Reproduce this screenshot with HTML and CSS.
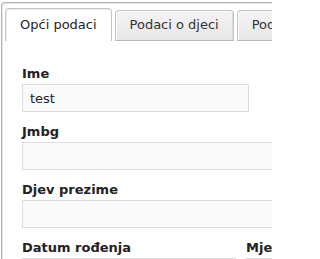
FILE: index.html
```html
<!DOCTYPE html>
<html>
<head>
<meta charset="utf-8">
<link rel="stylesheet" href="styles.css">
</head>
<body>
<div class="frame">
  <div class="tabs">
    <div class="tab active">Opći podaci</div>
    <div class="tab">Podaci o djeci</div>
    <div class="tab">Podaci o zaposlenju</div>
  </div>
  <div class="content">
    <div class="field">
      <label class="label">Ime</label>
      <input class="input input-short" type="text" value="test">
    </div>
    <div class="field">
      <label class="label">Jmbg</label>
      <input class="input input-long" type="text" value="">
    </div>
    <div class="field">
      <label class="label">Djev prezime</label>
      <input class="input input-long" type="text" value="">
    </div>
    <div class="row">
      <div class="field">
        <label class="label">Datum rođenja</label>
        <input class="input input-col" type="text" value="">
      </div>
      <div class="field">
        <label class="label">Mjesto rođenja</label>
        <input class="input input-col" type="text" value="">
      </div>
    </div>
  </div>
</div>
</body>
</html>
```
FILE: styles.css
```css
html, body {
  margin: 0;
  padding: 0;
  background: #ffffff;
}
html {
  overflow: hidden;
}
body {
  width: 272px;
  height: 259px;
  overflow: hidden;
  font-family: "DejaVu Sans", Verdana, sans-serif;
  font-size: 13px;
  color: #222;
}
.frame {
  box-sizing: border-box;
  margin-top: 2px;
  margin-left: 1px;
  width: 271px;
  height: 257px;
  overflow: hidden;
  border: 1px solid #b4b4b4;
  border-right: none;
  border-bottom: none;
  border-radius: 4px 0 0 0;
  box-shadow: inset 1px 1px 0 #e6e6e6;
}
.tabs {
  display: flex;
  align-items: flex-end;
  gap: 3px;
  padding: 5px 0 0 3px;
}
.tab {
  flex: none;
  white-space: nowrap;
  line-height: 16px;
  padding: 6px 14px 7px;
  border: 1px solid #c4c4c4;
  border-bottom-color: #b8b8b8;
  border-radius: 4px 4px 0 0;
  background: linear-gradient(#f4f4f4, #e7e7e7);
  box-shadow: inset 1px 1px 0 #fbfbfb, inset -1px 0 0 #dcdcdc;
  color: #333;
}
.tab.active {
  padding: 8px 14px 8px;
  border-bottom: none;
  background: #ffffff;
  box-shadow: inset 1px 1px 0 #ececec;
  color: #222;
}
.content {
  padding: 25px 0 0 20px;
}
.field {
  display: flex;
  flex-direction: column;
  align-items: flex-start;
  margin-bottom: 12px;
  min-width: 0;
}
.label {
  display: block;
  font-weight: bold;
  line-height: 16px;
  margin-bottom: 2px;
  white-space: nowrap;
  color: #222;
}
.input {
  box-sizing: border-box;
  height: 28px;
  margin: 0;
  padding: 0 7px;
  border: 1px solid #dcdcdc;
  background: #fafafa;
  font-family: "DejaVu Sans", Verdana, sans-serif;
  font-size: 13px;
  color: #222;
  outline: none;
  flex: none;
}
.input-short {
  width: 227px;
}
.input-long {
  width: 460px;
}
.input-col {
  width: 214px;
}
.row {
  display: grid;
  grid-template-columns: 224px 224px;
}
```
